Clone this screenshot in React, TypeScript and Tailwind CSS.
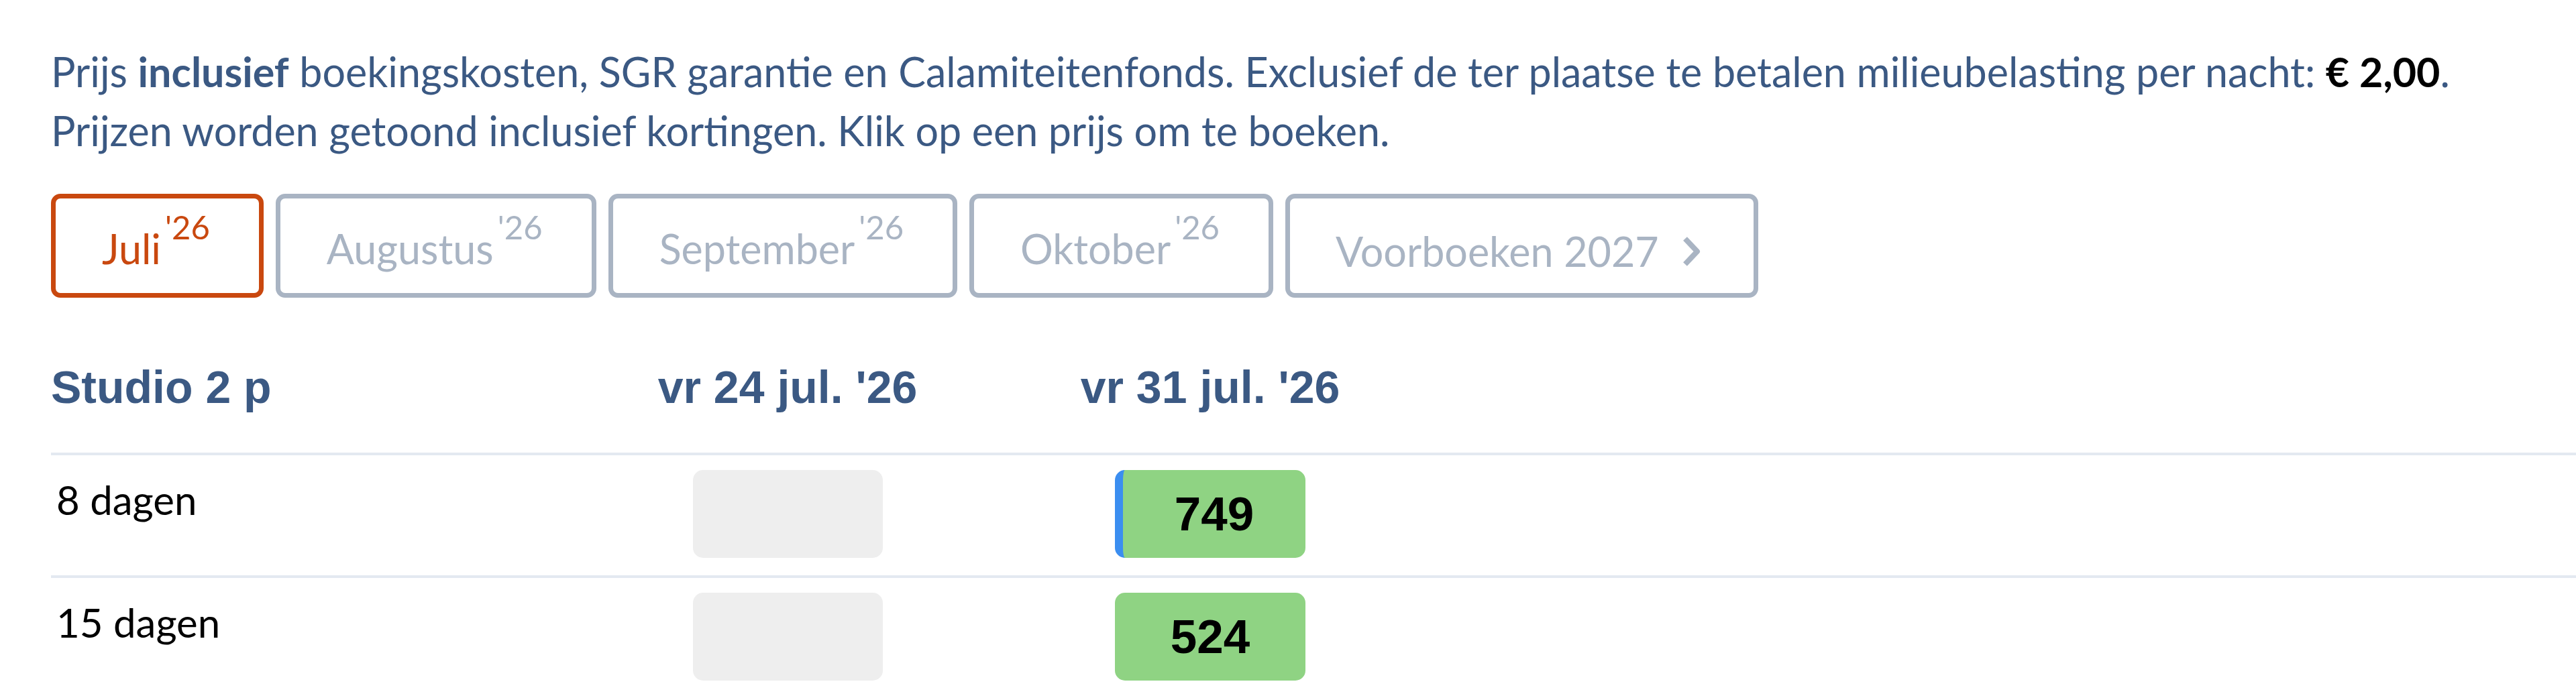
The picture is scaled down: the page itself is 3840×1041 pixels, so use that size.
import React from "react";

type Tab = { label: string; year?: string; active?: boolean; next?: boolean };

const tabs: Tab[] = [
  { label: "Juli", year: "'26", active: true },
  { label: "Augustus", year: "'26" },
  { label: "September", year: "'26" },
  { label: "Oktober", year: "'26" },
  { label: "Voorboeken 2027", next: true },
];

type Row = { label: string; prices: (number | null)[]; selected?: number };

const rows: Row[] = [
  { label: "8 dagen", prices: [null, 749], selected: 1 },
  { label: "15 dagen", prices: [null, 524] },
];

const dates = ["vr 24 jul. '26", "vr 31 jul. '26"];

function ChevronRight() {
  return (
    <svg width="32" height="48" viewBox="0 0 32 48" fill="none" className="ml-[33px]">
      <polyline
        points="6,5 24,24 6,43"
        stroke="#a9b4c3"
        strokeWidth="8"
        strokeLinejoin="round"
      />
    </svg>
  );
}

function MonthTab({ tab }: { tab: Tab }) {
  const color = tab.active ? "border-[#c9480f] text-[#c9480f]" : "border-[#a9b4c3] text-[#a9b4c3]";
  if (tab.next) {
    return (
      <button
        className={`h-[155px] border-[7px] rounded-[14px] bg-white pl-[68px] pr-[76px] pt-[44px] flex items-start cursor-pointer ${color}`}
      >
        <span className="flex items-center h-[70px] leading-[70px] whitespace-nowrap">
          {tab.label}
          <ChevronRight />
        </span>
      </button>
    );
  }
  return (
    <button
      className={`h-[155px] border-[7px] rounded-[14px] bg-white pl-[69px] pr-[67px] pt-[40px] flex items-start cursor-pointer ${color}`}
    >
      <span className="block leading-[70px] whitespace-nowrap">
        {tab.label}
        <sup className="ml-[6px] mr-[6px] text-[49px] top-[-37px]">{tab.year}</sup>
      </span>
    </button>
  );
}

function PriceCell({ price, selected }: { price: number | null; selected?: boolean }) {
  if (price === null) {
    return <div className="w-[283px] h-[131px] rounded-[15px] bg-[#eeeeee]" />;
  }
  return (
    <button
      className={`w-[284px] h-[131px] rounded-[15px] bg-[#8fd383] flex items-center justify-center cursor-pointer font-['Liberation_Sans',Arial,sans-serif] font-bold text-[71px] leading-none text-black ${
        selected ? "border-l-[12px] border-[#3b8ef0]" : ""
      }`}
    >
      {price}
    </button>
  );
}

export default function App() {
  return (
    <div className="min-h-screen bg-white font-['Lato','Noto_Sans',sans-serif] text-[61px] text-[#3b5983] pl-[76px] pt-[63px]">
      <p className="leading-[88px] whitespace-nowrap">
        Prijs <b className="font-bold">inclusief</b> boekingskosten, SGR garantie en Calamiteitenfonds. Exclusief de ter
        plaatse te betalen milieubelasting per nacht: <b className="font-bold text-black">€ 2,00</b>.
        <br />
        Prijzen worden getoond inclusief kortingen. Klik op een prijs om te boeken.
      </p>

      <div className="flex gap-[18px] mt-[50px]">
        {tabs.map((t) => (
          <MonthTab key={t.label} tab={t} />
        ))}
      </div>

      <div className="mt-[93px]">
        <div className="grid grid-cols-[783px_630px_630px_1fr] pb-[58px] font-['Liberation_Sans',Arial,sans-serif] font-bold text-[68px] leading-[80px] text-[#3b5983]">
          <div>Studio 2 p</div>
          {dates.map((d) => (
            <div key={d} className="text-center whitespace-nowrap">
              {d}
            </div>
          ))}
          <div />
        </div>

        {rows.map((r) => (
          <div
            key={r.label}
            className="grid grid-cols-[783px_630px_630px_1fr] border-t-4 border-[#e3e9f1] pt-[22px] pb-[26px]"
          >
            <div className="pl-[8px] leading-[88px] text-[60px] text-black">{r.label}</div>
            {r.prices.map((p, i) => (
              <div key={i} className="flex justify-center">
                <PriceCell price={p} selected={r.selected === i} />
              </div>
            ))}
            <div />
          </div>
        ))}
      </div>
    </div>
  );
}
